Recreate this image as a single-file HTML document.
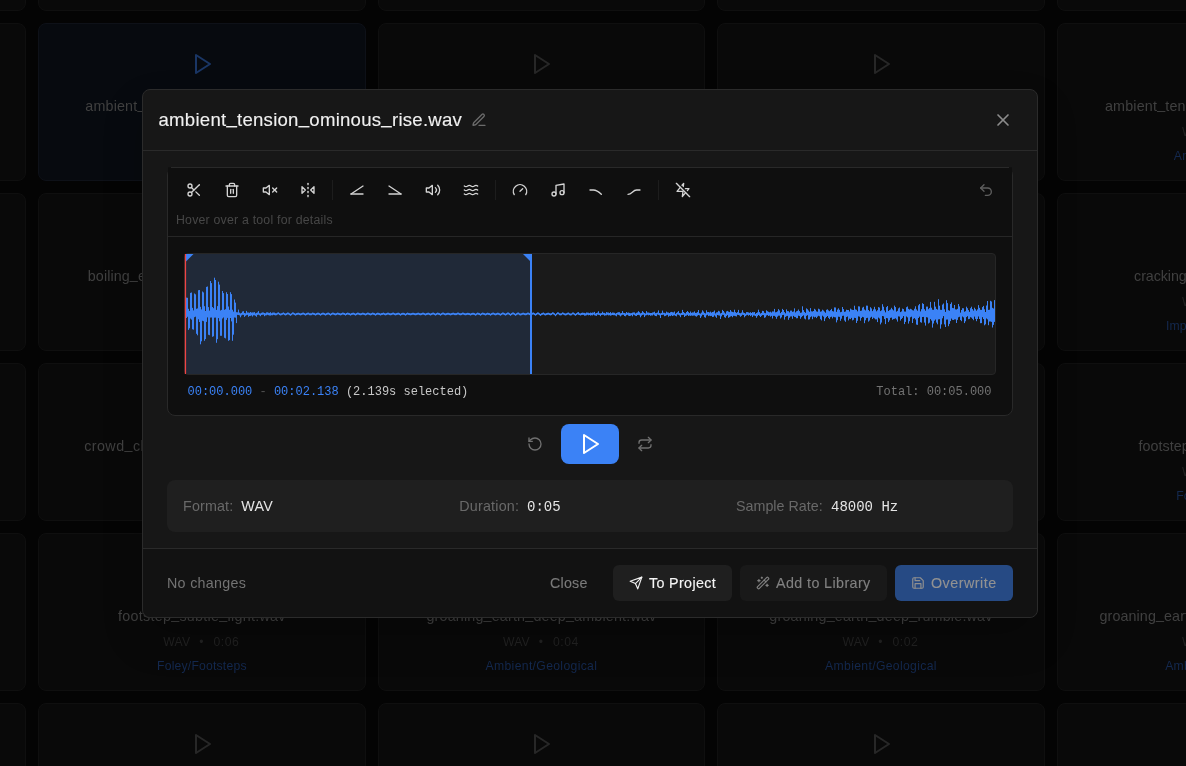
<!DOCTYPE html>
<html><head><meta charset="utf-8"><title>Audio Editor</title><style>
html,body{margin:0;padding:0}
html{width:1186px;height:766px;overflow:hidden;background:#040404}
body{width:1186px;height:766px;overflow:hidden;position:relative;background:#040404;font-family:"Liberation Sans",sans-serif}
#root{position:absolute;left:0;top:0;width:1186px;height:766px;overflow:hidden;will-change:transform}
.ic{position:absolute;display:block;overflow:visible}
.t{position:absolute;white-space:pre}
.u{position:relative;top:-0.145em}
.card{position:absolute;box-sizing:border-box;border:1px solid #0f0f0f;border-radius:8px}
#modal{position:absolute;left:142px;top:89px;width:896px;height:529px;box-sizing:border-box;background:#171717;border:1px solid #2b2b2b;border-radius:8px;box-shadow:0 20px 40px rgba(0,0,0,.2)}
#hdrline{position:absolute;left:143px;top:150px;width:894px;height:1px;background:#2a2a2a}
#ftr{position:absolute;left:143px;top:549px;width:894px;height:68px;background:#121212;border-radius:0 0 8px 8px}
#ftrline{position:absolute;left:143px;top:548px;width:894px;height:1px;background:#2a2a2a}
#panel{position:absolute;left:167px;top:167px;width:846px;height:249px;box-sizing:border-box;background:#0f0f0f;border:1px solid #292929;border-radius:8px}
#toolbar{position:absolute;left:168px;top:167px;width:844px;height:70px;box-sizing:border-box;background:#0f0f0f;border-top:1px solid #292929;border-bottom:1px solid #262626}
.sep{position:absolute;top:180px;width:1px;height:20px;background:#1d1d1d}
#wave{position:absolute;left:184px;top:253px;width:812px;height:122px;box-sizing:border-box;background:#1a1a1a;border:1px solid #262626;border-radius:4px}
#wave>*{position:absolute}
#sel{left:0;top:0;border-radius:3px 0 0 3px;width:347px;height:120px;background:#202938}
#selend{left:345px;top:0;width:2px;height:120px;background:#3b82f6}
#playhead{left:0;top:0;width:1.5px;height:120px;background:#ef4444}
#playbtn{position:absolute;left:561px;top:424px;width:58px;height:40px;border-radius:8px;background:#3b82f6}
#info{position:absolute;left:167px;top:480px;width:846px;height:52px;border-radius:8px;background:#1f1f1f}
.btn{position:absolute;top:565px;height:36px;border-radius:6px}
</style></head>
<body><div id="root">
<div class="card" style="left:-301.45px;top:-147px;width:327.55px;height:158px;background:#090909;border-color:#0f0f0f"></div>
<svg class="ic" style="left:-149.675px;top:-118px" width="24" height="24" viewBox="0 0 24 24" fill="none" stroke="#272727" stroke-width="2" stroke-linecap="round" stroke-linejoin="round"><polygon points="6 3 20 12 6 21 6 3"/></svg>
<div class="card" style="left:-301.45px;top:23px;width:327.55px;height:158px;background:#090909;border-color:#0f0f0f"></div>
<svg class="ic" style="left:-149.675px;top:52px" width="24" height="24" viewBox="0 0 24 24" fill="none" stroke="#272727" stroke-width="2" stroke-linecap="round" stroke-linejoin="round"><polygon points="6 3 20 12 6 21 6 3"/></svg>
<div class="card" style="left:-301.45px;top:193px;width:327.55px;height:158px;background:#090909;border-color:#0f0f0f"></div>
<svg class="ic" style="left:-149.675px;top:222px" width="24" height="24" viewBox="0 0 24 24" fill="none" stroke="#272727" stroke-width="2" stroke-linecap="round" stroke-linejoin="round"><polygon points="6 3 20 12 6 21 6 3"/></svg>
<div class="card" style="left:-301.45px;top:363px;width:327.55px;height:158px;background:#090909;border-color:#0f0f0f"></div>
<svg class="ic" style="left:-149.675px;top:392px" width="24" height="24" viewBox="0 0 24 24" fill="none" stroke="#272727" stroke-width="2" stroke-linecap="round" stroke-linejoin="round"><polygon points="6 3 20 12 6 21 6 3"/></svg>
<div class="card" style="left:-301.45px;top:533px;width:327.55px;height:158px;background:#090909;border-color:#0f0f0f"></div>
<svg class="ic" style="left:-149.675px;top:562px" width="24" height="24" viewBox="0 0 24 24" fill="none" stroke="#272727" stroke-width="2" stroke-linecap="round" stroke-linejoin="round"><polygon points="6 3 20 12 6 21 6 3"/></svg>
<div class="card" style="left:-301.45px;top:703px;width:327.55px;height:158px;background:#090909;border-color:#0f0f0f"></div>
<svg class="ic" style="left:-149.675px;top:732px" width="24" height="24" viewBox="0 0 24 24" fill="none" stroke="#272727" stroke-width="2" stroke-linecap="round" stroke-linejoin="round"><polygon points="6 3 20 12 6 21 6 3"/></svg>
<div class="card" style="left:38.10px;top:-147px;width:327.55px;height:158px;background:#090909;border-color:#0f0f0f"></div>
<svg class="ic" style="left:189.875px;top:-118px" width="24" height="24" viewBox="0 0 24 24" fill="none" stroke="#272727" stroke-width="2" stroke-linecap="round" stroke-linejoin="round"><polygon points="6 3 20 12 6 21 6 3"/></svg>
<div class="card" style="left:38.10px;top:23px;width:327.55px;height:158px;background:#070a0f;border-color:#0e1118"></div>
<svg class="ic" style="left:189.875px;top:52px" width="24" height="24" viewBox="0 0 24 24" fill="none" stroke="#1a3665" stroke-width="2" stroke-linecap="round" stroke-linejoin="round"><polygon points="6 3 20 12 6 21 6 3"/></svg>
<div class="t" style="left:-98.125px;width:600px;text-align:center;top:98.90px;font:14.3px/14.3px 'Liberation Sans',sans-serif;letter-spacing:0.183px;color:#404040;">ambient<span class="u">_</span>tension<span class="u">_</span>ominous<span class="u">_</span>rise.wav</div>
<div class="t" style="left:-123.125px;width:600px;text-align:center;top:126.17px;font:12.2px/12.2px 'Liberation Sans',sans-serif;letter-spacing:0.2px;color:#222222;">WAV</div>
<div class="t" style="left:-98.625px;width:600px;text-align:center;top:126.34px;font:12px/12px 'Liberation Sans',sans-serif;color:#222222;">•</div>
<div class="t" style="left:-73.625px;width:600px;text-align:center;top:126.17px;font:12.2px/12.2px 'Liberation Sans',sans-serif;letter-spacing:0.5px;color:#222222;">0:05</div>
<div class="t" style="left:-98.125px;width:600px;text-align:center;top:150.17px;font:12.2px/12.2px 'Liberation Sans',sans-serif;letter-spacing:0.129px;color:#14294f;">Ambient/Tension</div>
<div class="card" style="left:38.10px;top:193px;width:327.55px;height:158px;background:#090909;border-color:#0f0f0f"></div>
<svg class="ic" style="left:189.875px;top:222px" width="24" height="24" viewBox="0 0 24 24" fill="none" stroke="#272727" stroke-width="2" stroke-linecap="round" stroke-linejoin="round"><polygon points="6 3 20 12 6 21 6 3"/></svg>
<div class="t" style="left:-98.125px;width:600px;text-align:center;top:268.90px;font:14.3px/14.3px 'Liberation Sans',sans-serif;letter-spacing:0.101px;color:#404040;">boiling<span class="u">_</span>earth<span class="u">_</span>magma<span class="u">_</span>bubbles.wav</div>
<div class="t" style="left:-123.125px;width:600px;text-align:center;top:296.17px;font:12.2px/12.2px 'Liberation Sans',sans-serif;letter-spacing:0.2px;color:#222222;">WAV</div>
<div class="t" style="left:-98.625px;width:600px;text-align:center;top:296.34px;font:12px/12px 'Liberation Sans',sans-serif;color:#222222;">•</div>
<div class="t" style="left:-73.625px;width:600px;text-align:center;top:296.17px;font:12.2px/12.2px 'Liberation Sans',sans-serif;letter-spacing:0.5px;color:#222222;">0:07</div>
<div class="t" style="left:-98.125px;width:600px;text-align:center;top:320.17px;font:12.2px/12.2px 'Liberation Sans',sans-serif;letter-spacing:0.336px;color:#14294f;">Ambient/Geological</div>
<div class="card" style="left:38.10px;top:363px;width:327.55px;height:158px;background:#090909;border-color:#0f0f0f"></div>
<svg class="ic" style="left:189.875px;top:392px" width="24" height="24" viewBox="0 0 24 24" fill="none" stroke="#272727" stroke-width="2" stroke-linecap="round" stroke-linejoin="round"><polygon points="6 3 20 12 6 21 6 3"/></svg>
<div class="t" style="left:-98.125px;width:600px;text-align:center;top:438.90px;font:14.3px/14.3px 'Liberation Sans',sans-serif;letter-spacing:0.453px;color:#404040;">crowd<span class="u">_</span>chatter<span class="u">_</span>market<span class="u">_</span>distant.wav</div>
<div class="t" style="left:-123.125px;width:600px;text-align:center;top:466.17px;font:12.2px/12.2px 'Liberation Sans',sans-serif;letter-spacing:0.2px;color:#222222;">WAV</div>
<div class="t" style="left:-98.625px;width:600px;text-align:center;top:466.34px;font:12px/12px 'Liberation Sans',sans-serif;color:#222222;">•</div>
<div class="t" style="left:-73.625px;width:600px;text-align:center;top:466.17px;font:12.2px/12.2px 'Liberation Sans',sans-serif;letter-spacing:0.5px;color:#222222;">0:09</div>
<div class="t" style="left:-98.125px;width:600px;text-align:center;top:490.17px;font:12.2px/12.2px 'Liberation Sans',sans-serif;letter-spacing:0.133px;color:#14294f;">Ambient/Crowd</div>
<div class="card" style="left:38.10px;top:533px;width:327.55px;height:158px;background:#090909;border-color:#0f0f0f"></div>
<svg class="ic" style="left:189.875px;top:562px" width="24" height="24" viewBox="0 0 24 24" fill="none" stroke="#272727" stroke-width="2" stroke-linecap="round" stroke-linejoin="round"><polygon points="6 3 20 12 6 21 6 3"/></svg>
<div class="t" style="left:-98.125px;width:600px;text-align:center;top:608.90px;font:14.3px/14.3px 'Liberation Sans',sans-serif;letter-spacing:0.284px;color:#404040;">footstep<span class="u">_</span>subtle<span class="u">_</span>light.wav</div>
<div class="t" style="left:-123.125px;width:600px;text-align:center;top:636.17px;font:12.2px/12.2px 'Liberation Sans',sans-serif;letter-spacing:0.2px;color:#222222;">WAV</div>
<div class="t" style="left:-98.625px;width:600px;text-align:center;top:636.34px;font:12px/12px 'Liberation Sans',sans-serif;color:#222222;">•</div>
<div class="t" style="left:-73.625px;width:600px;text-align:center;top:636.17px;font:12.2px/12.2px 'Liberation Sans',sans-serif;letter-spacing:0.5px;color:#222222;">0:06</div>
<div class="t" style="left:-98.125px;width:600px;text-align:center;top:660.17px;font:12.2px/12.2px 'Liberation Sans',sans-serif;letter-spacing:0.193px;color:#14294f;">Foley/Footsteps</div>
<div class="card" style="left:38.10px;top:703px;width:327.55px;height:158px;background:#090909;border-color:#0f0f0f"></div>
<svg class="ic" style="left:189.875px;top:732px" width="24" height="24" viewBox="0 0 24 24" fill="none" stroke="#272727" stroke-width="2" stroke-linecap="round" stroke-linejoin="round"><polygon points="6 3 20 12 6 21 6 3"/></svg>
<div class="card" style="left:377.65px;top:-147px;width:327.55px;height:158px;background:#090909;border-color:#0f0f0f"></div>
<svg class="ic" style="left:529.425px;top:-118px" width="24" height="24" viewBox="0 0 24 24" fill="none" stroke="#272727" stroke-width="2" stroke-linecap="round" stroke-linejoin="round"><polygon points="6 3 20 12 6 21 6 3"/></svg>
<div class="card" style="left:377.65px;top:23px;width:327.55px;height:158px;background:#090909;border-color:#0f0f0f"></div>
<svg class="ic" style="left:529.425px;top:52px" width="24" height="24" viewBox="0 0 24 24" fill="none" stroke="#272727" stroke-width="2" stroke-linecap="round" stroke-linejoin="round"><polygon points="6 3 20 12 6 21 6 3"/></svg>
<div class="card" style="left:377.65px;top:193px;width:327.55px;height:158px;background:#090909;border-color:#0f0f0f"></div>
<svg class="ic" style="left:529.425px;top:222px" width="24" height="24" viewBox="0 0 24 24" fill="none" stroke="#272727" stroke-width="2" stroke-linecap="round" stroke-linejoin="round"><polygon points="6 3 20 12 6 21 6 3"/></svg>
<div class="card" style="left:377.65px;top:363px;width:327.55px;height:158px;background:#090909;border-color:#0f0f0f"></div>
<svg class="ic" style="left:529.425px;top:392px" width="24" height="24" viewBox="0 0 24 24" fill="none" stroke="#272727" stroke-width="2" stroke-linecap="round" stroke-linejoin="round"><polygon points="6 3 20 12 6 21 6 3"/></svg>
<div class="card" style="left:377.65px;top:533px;width:327.55px;height:158px;background:#090909;border-color:#0f0f0f"></div>
<svg class="ic" style="left:529.425px;top:562px" width="24" height="24" viewBox="0 0 24 24" fill="none" stroke="#272727" stroke-width="2" stroke-linecap="round" stroke-linejoin="round"><polygon points="6 3 20 12 6 21 6 3"/></svg>
<div class="t" style="left:241.425px;width:600px;text-align:center;top:608.90px;font:14.3px/14.3px 'Liberation Sans',sans-serif;letter-spacing:0.187px;color:#404040;">groaning<span class="u">_</span>earth<span class="u">_</span>deep<span class="u">_</span>ambient.wav</div>
<div class="t" style="left:216.425px;width:600px;text-align:center;top:636.17px;font:12.2px/12.2px 'Liberation Sans',sans-serif;letter-spacing:0.2px;color:#222222;">WAV</div>
<div class="t" style="left:240.925px;width:600px;text-align:center;top:636.34px;font:12px/12px 'Liberation Sans',sans-serif;color:#222222;">•</div>
<div class="t" style="left:265.925px;width:600px;text-align:center;top:636.17px;font:12.2px/12.2px 'Liberation Sans',sans-serif;letter-spacing:0.5px;color:#222222;">0:04</div>
<div class="t" style="left:241.425px;width:600px;text-align:center;top:660.17px;font:12.2px/12.2px 'Liberation Sans',sans-serif;letter-spacing:0.336px;color:#14294f;">Ambient/Geological</div>
<div class="card" style="left:377.65px;top:703px;width:327.55px;height:158px;background:#090909;border-color:#0f0f0f"></div>
<svg class="ic" style="left:529.425px;top:732px" width="24" height="24" viewBox="0 0 24 24" fill="none" stroke="#272727" stroke-width="2" stroke-linecap="round" stroke-linejoin="round"><polygon points="6 3 20 12 6 21 6 3"/></svg>
<div class="card" style="left:717.20px;top:-147px;width:327.55px;height:158px;background:#090909;border-color:#0f0f0f"></div>
<svg class="ic" style="left:868.975px;top:-118px" width="24" height="24" viewBox="0 0 24 24" fill="none" stroke="#272727" stroke-width="2" stroke-linecap="round" stroke-linejoin="round"><polygon points="6 3 20 12 6 21 6 3"/></svg>
<div class="card" style="left:717.20px;top:23px;width:327.55px;height:158px;background:#090909;border-color:#0f0f0f"></div>
<svg class="ic" style="left:868.975px;top:52px" width="24" height="24" viewBox="0 0 24 24" fill="none" stroke="#272727" stroke-width="2" stroke-linecap="round" stroke-linejoin="round"><polygon points="6 3 20 12 6 21 6 3"/></svg>
<div class="card" style="left:717.20px;top:193px;width:327.55px;height:158px;background:#090909;border-color:#0f0f0f"></div>
<svg class="ic" style="left:868.975px;top:222px" width="24" height="24" viewBox="0 0 24 24" fill="none" stroke="#272727" stroke-width="2" stroke-linecap="round" stroke-linejoin="round"><polygon points="6 3 20 12 6 21 6 3"/></svg>
<div class="card" style="left:717.20px;top:363px;width:327.55px;height:158px;background:#090909;border-color:#0f0f0f"></div>
<svg class="ic" style="left:868.975px;top:392px" width="24" height="24" viewBox="0 0 24 24" fill="none" stroke="#272727" stroke-width="2" stroke-linecap="round" stroke-linejoin="round"><polygon points="6 3 20 12 6 21 6 3"/></svg>
<div class="card" style="left:717.20px;top:533px;width:327.55px;height:158px;background:#090909;border-color:#0f0f0f"></div>
<svg class="ic" style="left:868.975px;top:562px" width="24" height="24" viewBox="0 0 24 24" fill="none" stroke="#272727" stroke-width="2" stroke-linecap="round" stroke-linejoin="round"><polygon points="6 3 20 12 6 21 6 3"/></svg>
<div class="t" style="left:580.975px;width:600px;text-align:center;top:608.90px;font:14.3px/14.3px 'Liberation Sans',sans-serif;letter-spacing:0.209px;color:#404040;">groaning<span class="u">_</span>earth<span class="u">_</span>deep<span class="u">_</span>rumble.wav</div>
<div class="t" style="left:555.975px;width:600px;text-align:center;top:636.17px;font:12.2px/12.2px 'Liberation Sans',sans-serif;letter-spacing:0.2px;color:#222222;">WAV</div>
<div class="t" style="left:580.475px;width:600px;text-align:center;top:636.34px;font:12px/12px 'Liberation Sans',sans-serif;color:#222222;">•</div>
<div class="t" style="left:605.475px;width:600px;text-align:center;top:636.17px;font:12.2px/12.2px 'Liberation Sans',sans-serif;letter-spacing:0.5px;color:#222222;">0:02</div>
<div class="t" style="left:580.975px;width:600px;text-align:center;top:660.17px;font:12.2px/12.2px 'Liberation Sans',sans-serif;letter-spacing:0.336px;color:#14294f;">Ambient/Geological</div>
<div class="card" style="left:717.20px;top:703px;width:327.55px;height:158px;background:#090909;border-color:#0f0f0f"></div>
<svg class="ic" style="left:868.975px;top:732px" width="24" height="24" viewBox="0 0 24 24" fill="none" stroke="#272727" stroke-width="2" stroke-linecap="round" stroke-linejoin="round"><polygon points="6 3 20 12 6 21 6 3"/></svg>
<div class="card" style="left:1056.75px;top:-147px;width:327.55px;height:158px;background:#090909;border-color:#0f0f0f"></div>
<svg class="ic" style="left:1208.53px;top:-118px" width="24" height="24" viewBox="0 0 24 24" fill="none" stroke="#272727" stroke-width="2" stroke-linecap="round" stroke-linejoin="round"><polygon points="6 3 20 12 6 21 6 3"/></svg>
<div class="card" style="left:1056.75px;top:23px;width:327.55px;height:158px;background:#090909;border-color:#0f0f0f"></div>
<svg class="ic" style="left:1208.53px;top:52px" width="24" height="24" viewBox="0 0 24 24" fill="none" stroke="#272727" stroke-width="2" stroke-linecap="round" stroke-linejoin="round"><polygon points="6 3 20 12 6 21 6 3"/></svg>
<div class="t" style="left:920.525px;width:600px;text-align:center;top:98.90px;font:14.3px/14.3px 'Liberation Sans',sans-serif;letter-spacing:0.194px;color:#404040;">ambient<span class="u">_</span>tension<span class="u">_</span>subtle<span class="u">_</span>drone.wav</div>
<div class="t" style="left:895.525px;width:600px;text-align:center;top:126.17px;font:12.2px/12.2px 'Liberation Sans',sans-serif;letter-spacing:0.2px;color:#222222;">WAV</div>
<div class="t" style="left:920.025px;width:600px;text-align:center;top:126.34px;font:12px/12px 'Liberation Sans',sans-serif;color:#222222;">•</div>
<div class="t" style="left:945.025px;width:600px;text-align:center;top:126.17px;font:12.2px/12.2px 'Liberation Sans',sans-serif;letter-spacing:0.5px;color:#222222;">0:08</div>
<div class="t" style="left:920.525px;width:600px;text-align:center;top:150.17px;font:12.2px/12.2px 'Liberation Sans',sans-serif;letter-spacing:0.215px;color:#14294f;">Ambient/Tension</div>
<div class="card" style="left:1056.75px;top:193px;width:327.55px;height:158px;background:#090909;border-color:#0f0f0f"></div>
<svg class="ic" style="left:1208.53px;top:222px" width="24" height="24" viewBox="0 0 24 24" fill="none" stroke="#272727" stroke-width="2" stroke-linecap="round" stroke-linejoin="round"><polygon points="6 3 20 12 6 21 6 3"/></svg>
<div class="t" style="left:920.525px;width:600px;text-align:center;top:268.90px;font:14.3px/14.3px 'Liberation Sans',sans-serif;letter-spacing:-0.081px;color:#404040;">cracking<span class="u">_</span>wood<span class="u">_</span>impact.wav</div>
<div class="t" style="left:895.525px;width:600px;text-align:center;top:296.17px;font:12.2px/12.2px 'Liberation Sans',sans-serif;letter-spacing:0.2px;color:#222222;">WAV</div>
<div class="t" style="left:920.025px;width:600px;text-align:center;top:296.34px;font:12px/12px 'Liberation Sans',sans-serif;color:#222222;">•</div>
<div class="t" style="left:945.025px;width:600px;text-align:center;top:296.17px;font:12.2px/12.2px 'Liberation Sans',sans-serif;letter-spacing:0.5px;color:#222222;">0:03</div>
<div class="t" style="left:920.525px;width:600px;text-align:center;top:320.17px;font:12.2px/12.2px 'Liberation Sans',sans-serif;letter-spacing:0.066px;color:#14294f;">Impacts/Destruction</div>
<div class="card" style="left:1056.75px;top:363px;width:327.55px;height:158px;background:#090909;border-color:#0f0f0f"></div>
<svg class="ic" style="left:1208.53px;top:392px" width="24" height="24" viewBox="0 0 24 24" fill="none" stroke="#272727" stroke-width="2" stroke-linecap="round" stroke-linejoin="round"><polygon points="6 3 20 12 6 21 6 3"/></svg>
<div class="t" style="left:920.525px;width:600px;text-align:center;top:438.90px;font:14.3px/14.3px 'Liberation Sans',sans-serif;letter-spacing:0.036px;color:#404040;">footstep<span class="u">_</span>subtle<span class="u">_</span>hard.wav</div>
<div class="t" style="left:895.525px;width:600px;text-align:center;top:466.17px;font:12.2px/12.2px 'Liberation Sans',sans-serif;letter-spacing:0.2px;color:#222222;">WAV</div>
<div class="t" style="left:920.025px;width:600px;text-align:center;top:466.34px;font:12px/12px 'Liberation Sans',sans-serif;color:#222222;">•</div>
<div class="t" style="left:945.025px;width:600px;text-align:center;top:466.17px;font:12.2px/12.2px 'Liberation Sans',sans-serif;letter-spacing:0.5px;color:#222222;">0:04</div>
<div class="t" style="left:920.525px;width:600px;text-align:center;top:490.17px;font:12.2px/12.2px 'Liberation Sans',sans-serif;letter-spacing:0.129px;color:#14294f;">Foley/Footsteps</div>
<div class="card" style="left:1056.75px;top:533px;width:327.55px;height:158px;background:#090909;border-color:#0f0f0f"></div>
<svg class="ic" style="left:1208.53px;top:562px" width="24" height="24" viewBox="0 0 24 24" fill="none" stroke="#272727" stroke-width="2" stroke-linecap="round" stroke-linejoin="round"><polygon points="6 3 20 12 6 21 6 3"/></svg>
<div class="t" style="left:920.525px;width:600px;text-align:center;top:608.90px;font:14.3px/14.3px 'Liberation Sans',sans-serif;letter-spacing:0.106px;color:#404040;">groaning<span class="u">_</span>earth<span class="u">_</span>rumble<span class="u">_</span>distance.wav</div>
<div class="t" style="left:895.525px;width:600px;text-align:center;top:636.17px;font:12.2px/12.2px 'Liberation Sans',sans-serif;letter-spacing:0.2px;color:#222222;">WAV</div>
<div class="t" style="left:920.025px;width:600px;text-align:center;top:636.34px;font:12px/12px 'Liberation Sans',sans-serif;color:#222222;">•</div>
<div class="t" style="left:945.025px;width:600px;text-align:center;top:636.17px;font:12.2px/12.2px 'Liberation Sans',sans-serif;letter-spacing:0.5px;color:#222222;">0:05</div>
<div class="t" style="left:920.525px;width:600px;text-align:center;top:660.17px;font:12.2px/12.2px 'Liberation Sans',sans-serif;letter-spacing:0.283px;color:#14294f;">Ambient/Geological</div>
<div class="card" style="left:1056.75px;top:703px;width:327.55px;height:158px;background:#090909;border-color:#0f0f0f"></div>
<svg class="ic" style="left:1208.53px;top:732px" width="24" height="24" viewBox="0 0 24 24" fill="none" stroke="#272727" stroke-width="2" stroke-linecap="round" stroke-linejoin="round"><polygon points="6 3 20 12 6 21 6 3"/></svg>
<div id="modal"></div>
<div id="ftr"></div><div id="hdrline"></div><div id="ftrline"></div>
<div class="t" style="left:158.5px;top:110.76px;font:18.6px/18.6px 'Liberation Sans',sans-serif;letter-spacing:0.25px;color:#f0f0f0;-webkit-text-stroke:0.12px currentColor">ambient<span class="u">_</span>tension<span class="u">_</span>ominous<span class="u">_</span>rise.wav</div>
<svg class="ic" style="left:471px;top:112px" width="16" height="16" viewBox="0 0 24 24" fill="none" stroke="#6b6b6b" stroke-width="2" stroke-linecap="round" stroke-linejoin="round"><path d="M12 20h9"/><path d="M16.376 3.622a1 1 0 0 1 3.002 3.002L7.368 18.635a2 2 0 0 1-.855.506l-2.872.838a.5.5 0 0 1-.62-.62l.838-2.872a2 2 0 0 1 .506-.854z"/></svg>
<svg class="ic" style="left:993px;top:110px" width="20" height="20" viewBox="0 0 24 24" fill="none" stroke="#8c8c8c" stroke-width="2" stroke-linecap="round" stroke-linejoin="round"><path d="M18 6 6 18"/><path d="m6 6 12 12"/></svg>
<div id="panel"></div><div id="toolbar"></div><div style="position:absolute;left:168px;top:167px;width:3px;height:1px;background:#111"></div><div style="position:absolute;left:1009px;top:167px;width:3px;height:1px;background:#111"></div>
<svg class="ic" style="left:186px;top:182px" width="16" height="16" viewBox="0 0 24 24" fill="none" stroke="#d4d4d4" stroke-width="2" stroke-linecap="round" stroke-linejoin="round"><circle cx="6" cy="6" r="3"/><path d="M8.12 8.12 12 12"/><path d="M20 4 8.12 15.88"/><circle cx="6" cy="18" r="3"/><path d="M14.8 14.8 20 20"/></svg>
<svg class="ic" style="left:224px;top:182px" width="16" height="16" viewBox="0 0 24 24" fill="none" stroke="#d4d4d4" stroke-width="2" stroke-linecap="round" stroke-linejoin="round"><path d="M3 6h18"/><path d="M19 6v14c0 1-1 2-2 2H7c-1 0-2-1-2-2V6"/><path d="M8 6V4c0-1 1-2 2-2h4c1 0 2 1 2 2v2"/><path d="M10 11v6"/><path d="M14 11v6"/></svg>
<svg class="ic" style="left:262px;top:182px" width="16" height="16" viewBox="0 0 24 24" fill="none" stroke="#d4d4d4" stroke-width="2" stroke-linecap="round" stroke-linejoin="round"><polygon points="11 5 6 9 2 9 2 15 6 15 11 19 11 5"/><path d="M22 9l-6 6"/><path d="M16 9l6 6"/></svg>
<svg class="ic" style="left:300px;top:182px" width="16" height="16" viewBox="0 0 24 24" fill="none" stroke="#d4d4d4" stroke-width="2" stroke-linecap="round" stroke-linejoin="round"><path d="m3 7 5 5-5 5V7"/><path d="m21 7-5 5 5 5V7"/><path d="M12 20v2"/><path d="M12 14v2"/><path d="M12 8v2"/><path d="M12 2v2"/></svg>
<svg class="ic" style="left:349px;top:182px" width="16" height="16" viewBox="0 0 24 24" fill="none" stroke="#d4d4d4" stroke-width="2" stroke-linecap="round" stroke-linejoin="round"><path d="M3 18h18"/><path d="M3 18 21 6"/></svg>
<svg class="ic" style="left:387px;top:182px" width="16" height="16" viewBox="0 0 24 24" fill="none" stroke="#d4d4d4" stroke-width="2" stroke-linecap="round" stroke-linejoin="round"><path d="M3 18h18"/><path d="M3 6 21 18"/></svg>
<svg class="ic" style="left:425px;top:182px" width="16" height="16" viewBox="0 0 24 24" fill="none" stroke="#d4d4d4" stroke-width="2" stroke-linecap="round" stroke-linejoin="round"><polygon points="11 5 6 9 2 9 2 15 6 15 11 19 11 5"/><path d="M15.540 8.460a5 5 0 0 1 0 7.070"/><path d="M19.070 4.930a10 10 0 0 1 0 14.140"/></svg>
<svg class="ic" style="left:463px;top:182px" width="16" height="16" viewBox="0 0 24 24" fill="none" stroke="#d4d4d4" stroke-width="2" stroke-linecap="round" stroke-linejoin="round"><path d="M2 6c.6.5 1.2 1 2.500 1C7 7 7 5 9.500 5c2.600 0 2.400 2 5 2 2.500 0 2.500-2 5-2 1.300 0 1.900.5 2.500 1"/><path d="M2 12c.6.5 1.200 1 2.500 1 2.500 0 2.500-2 5-2 2.600 0 2.400 2 5 2 2.500 0 2.500-2 5-2 1.300 0 1.900.5 2.500 1"/><path d="M2 18c.6.5 1.200 1 2.500 1 2.500 0 2.500-2 5-2 2.600 0 2.400 2 5 2 2.500 0 2.500-2 5-2 1.300 0 1.900.5 2.500 1"/></svg>
<svg class="ic" style="left:512px;top:182px" width="16" height="16" viewBox="0 0 24 24" fill="none" stroke="#d4d4d4" stroke-width="2" stroke-linecap="round" stroke-linejoin="round"><path d="m12 14 4-4"/><path d="M3.340 19a10 10 0 1 1 17.320 0"/></svg>
<svg class="ic" style="left:550px;top:182px" width="16" height="16" viewBox="0 0 24 24" fill="none" stroke="#d4d4d4" stroke-width="2" stroke-linecap="round" stroke-linejoin="round"><path d="M9 18V5l12-2v13"/><circle cx="6" cy="18" r="3"/><circle cx="18" cy="16" r="3"/></svg>
<svg class="ic" style="left:588px;top:182px" width="16" height="16" viewBox="0 0 24 24" fill="none" stroke="#d4d4d4" stroke-width="2" stroke-linecap="round" stroke-linejoin="round"><path d="M3 12h5c5 0 8 2.500 12 6.500"/></svg>
<svg class="ic" style="left:626px;top:182px" width="16" height="16" viewBox="0 0 24 24" fill="none" stroke="#d4d4d4" stroke-width="2" stroke-linecap="round" stroke-linejoin="round"><path d="M3 18.500c6 0 7-6.500 13-6.500h5"/></svg>
<svg class="ic" style="left:675px;top:182px" width="16" height="16" viewBox="0 0 24 24" fill="none" stroke="#d4d4d4" stroke-width="2" stroke-linecap="round" stroke-linejoin="round"><polyline points="12.41 6.75 13 2 10.57 4.92"/><polyline points="18.57 12.91 21 10 15.66 10"/><polyline points="8 8 3 14 12 14 11 22 16 16"/><path d="M2 2l20 20"/></svg>
<div class="sep" style="left:332px"></div>
<div class="sep" style="left:495px"></div>
<div class="sep" style="left:658px"></div>
<svg class="ic" style="left:978px;top:182px" width="16" height="16" viewBox="0 0 24 24" fill="none" stroke="#5e5e5e" stroke-width="2" stroke-linecap="round" stroke-linejoin="round"><path d="M9 14 4 9l5-5"/><path d="M4 9h10.500a5.500 5.500 0 0 1 5.500 5.500a5.500 5.500 0 0 1-5.500 5.500H11"/></svg>
<div class="t" style="left:176px;top:213.59px;font:12.3px/12.3px 'Liberation Sans',sans-serif;letter-spacing:0.22px;color:#474747;">Hover over a tool for details</div>
<div id="wave"><div id="sel"></div><svg class="ic" style="left:0;top:0" width="810" height="120" viewBox="0 0 810 120"><path d="M0.5 56.1V75.8M1.5 43.6V64.0M2.5 43.8V62.8M3.5 54.8V75.9M4.5 56.9V74.3M5.5 38.9V64.6M6.5 38.5V65.6M7.5 53.9V75.3M8.5 56.4V75.7M9.5 39.5V63.2M10.5 40.3V62.7M11.5 54.8V79.8M12.5 54.4V81.3M13.5 36.2V65.3M14.5 36.0V68.0M15.5 52.8V90.3M16.5 55.4V87.3M17.5 37.5V66.8M18.5 38.4V67.2M19.5 52.2V86.8M20.5 57.0V85.1M21.5 32.9V67.9M22.5 32.5V63.4M23.5 53.1V80.8M24.5 56.6V81.2M25.5 27.0V63.6M26.5 29.1V63.5M27.5 53.0V82.8M28.5 54.2V82.3M29.5 23.7V63.7M30.5 26.0V63.6M31.5 55.9V88.8M32.5 52.1V85.2M33.5 27.7V64.1M34.5 30.6V67.3M35.5 56.5V81.8M36.5 55.9V81.8M37.5 37.0V64.5M38.5 39.1V63.5M39.5 55.8V83.8M40.5 55.2V84.4M41.5 38.2V65.9M42.5 40.0V63.9M43.5 52.5V86.8M44.5 55.8V86.1M45.5 38.2V64.0M46.5 40.1V67.4M47.5 55.7V86.8M48.5 57.6V80.7M49.5 45.5V63.5M50.5 48.6V63.7M51.5 58.2V69.1M52.5 58.3V60.9M53.5 55.6V61.0M54.5 58.6V61.4M55.5 59.4V63.3M56.5 58.9V61.5M57.5 57.5V60.8M58.5 57.2V60.9M59.5 59.0V62.9M60.5 59.3V61.8M61.5 56.9V61.2M62.5 58.5V60.9M63.5 58.5V62.8M64.5 58.8V62.0M65.5 58.0V61.9M66.5 58.6V61.4M67.5 58.4V62.5M68.5 58.4V61.3M69.5 58.1V61.3M70.5 59.4V61.8M71.5 58.9V62.8M72.5 58.4V60.9M73.5 57.1V60.7M74.5 59.2V61.3M75.5 59.4V62.2M76.5 58.8V61.0M77.5 58.4V60.8M78.5 58.5V60.7M79.5 59.0V62.2M80.5 59.3V61.4M81.5 58.4V61.3M82.5 58.3V60.8M83.5 58.7V61.2M84.5 58.9V61.5M85.5 58.2V61.6M86.5 59.2V61.2M87.5 58.6V61.3M88.5 58.5V60.8M89.5 58.6V61.1M90.5 59.2V61.4M91.5 59.2V61.2M92.5 58.6V60.6M93.5 58.3V60.3M94.5 59.1V61.1M95.5 59.5V61.5M96.5 59.2V61.2M97.5 58.8V60.8M98.5 58.4V60.4M99.5 59.1V61.1M100.5 59.5V61.5M101.5 59.1V61.1M102.5 58.5V60.5M103.5 58.6V60.6M104.5 59.2V61.2M105.5 59.8V61.8M106.5 59.2V61.2M107.5 58.4V60.4M108.5 58.5V60.5M109.5 59.1V61.1M110.5 59.6V61.6M111.5 59.1V61.1M112.5 58.8V60.8M113.5 58.7V60.7M114.5 59.1V61.1M115.5 59.4V61.4M116.5 59.1V61.1M117.5 58.7V60.7M118.5 58.6V60.6M119.5 59.1V61.1M120.5 59.6V61.6M121.5 59.1V61.1M122.5 58.7V60.7M123.5 58.6V60.6M124.5 59.2V61.2M125.5 59.3V61.3M126.5 59.2V61.2M127.5 58.6V60.6M128.5 58.8V60.8M129.5 59.1V61.1M130.5 59.6V61.6M131.5 59.1V61.1M132.5 58.7V60.7M133.5 58.7V60.7M134.5 59.1V61.1M135.5 59.7V61.7M136.5 59.1V61.1M137.5 58.7V60.7M138.5 58.7V60.7M139.5 59.1V61.1M140.5 59.6V61.6M141.5 59.1V61.1M142.5 58.7V60.7M143.5 58.6V60.6M144.5 59.1V61.1M145.5 59.7V61.7M146.5 59.1V61.1M147.5 58.6V60.6M148.5 58.7V60.7M149.5 59.1V61.1M150.5 59.4V61.4M151.5 59.1V61.1M152.5 58.6V60.6M153.5 58.8V60.8M154.5 59.1V61.1M155.5 59.4V61.4M156.5 59.1V61.1M157.5 58.6V60.6M158.5 58.7V60.7M159.5 59.0V61.0M160.5 59.6V61.6M161.5 59.0V61.0M162.5 58.6V60.6M163.5 58.8V60.8M164.5 59.1V61.1M165.5 59.6V61.6M166.5 59.1V61.1M167.5 58.8V60.8M168.5 58.7V60.7M169.5 59.1V61.1M170.5 59.6V61.6M171.5 59.1V61.1M172.5 58.6V60.6M173.5 58.7V60.7M174.5 59.1V61.1M175.5 59.3V61.3M176.5 59.1V61.1M177.5 58.7V60.7M178.5 58.8V60.8M179.5 59.1V61.1M180.5 59.5V61.5M181.5 59.1V61.1M182.5 58.6V60.6M183.5 58.7V60.7M184.5 59.1V61.1M185.5 59.4V61.4M186.5 59.1V61.1M187.5 58.6V60.6M188.5 58.8V60.8M189.5 59.1V61.1M190.5 59.7V61.7M191.5 59.1V61.1M192.5 58.7V60.7M193.5 58.8V60.8M194.5 59.1V61.1M195.5 59.5V61.5M196.5 59.1V61.1M197.5 58.9V60.9M198.5 58.6V60.6M199.5 59.1V61.1M200.5 59.4V61.4M201.5 59.1V61.1M202.5 58.7V60.7M203.5 58.7V60.7M204.5 59.1V61.1M205.5 59.3V61.3M206.5 59.1V61.1M207.5 58.7V60.7M208.5 58.6V60.6M209.5 59.1V61.1M210.5 59.4V61.4M211.5 59.1V61.1M212.5 58.8V60.8M213.5 58.7V60.7M214.5 59.1V61.1M215.5 59.7V61.7M216.5 59.1V61.1M217.5 58.8V60.8M218.5 58.8V60.8M219.5 59.1V61.1M220.5 59.7V61.7M221.5 59.1V61.1M222.5 58.6V60.6M223.5 58.9V60.9M224.5 59.1V61.1M225.5 59.3V61.3M226.5 59.1V61.1M227.5 58.8V60.8M228.5 58.8V60.8M229.5 59.1V61.1M230.5 59.3V61.3M231.5 59.1V61.1M232.5 58.8V60.8M233.5 58.7V60.7M234.5 59.1V61.1M235.5 59.3V61.3M236.5 59.1V61.1M237.5 58.7V60.7M238.5 58.7V60.7M239.5 59.1V61.1M240.5 59.5V61.5M241.5 59.1V61.1M242.5 58.8V60.8M243.5 58.7V60.7M244.5 59.1V61.1M245.5 59.5V61.5M246.5 59.1V61.1M247.5 58.7V60.7M248.5 58.6V60.6M249.5 59.1V61.1M250.5 59.6V61.6M251.5 59.1V61.1M252.5 58.6V60.6M253.5 58.8V60.8M254.5 59.1V61.1M255.5 59.7V61.7M256.5 59.1V61.1M257.5 58.6V60.6M258.5 58.6V60.6M259.5 59.1V61.1M260.5 59.4V61.4M261.5 59.1V61.1M262.5 58.8V60.8M263.5 58.8V60.8M264.5 59.1V61.1M265.5 59.4V61.4M266.5 59.1V61.1M267.5 58.8V60.8M268.5 58.7V60.7M269.5 59.1V61.1M270.5 59.2V61.2M271.5 59.1V61.1M272.5 58.6V60.6M273.5 58.6V60.6M274.5 59.1V61.1M275.5 59.3V61.3M276.5 59.1V61.1M277.5 58.6V60.6M278.5 58.7V60.7M279.5 59.1V61.1M280.5 59.3V61.3M281.5 59.1V61.1M282.5 58.8V60.8M283.5 58.9V60.9M284.5 59.1V61.1M285.5 59.5V61.5M286.5 59.1V61.1M287.5 58.8V60.8M288.5 58.8V60.8M289.5 59.1V61.1M290.5 59.7V61.7M291.5 59.2V61.2M292.5 58.6V60.6M293.5 58.8V60.8M294.5 59.1V61.1M295.5 59.7V61.7M296.5 59.1V61.1M297.5 58.6V60.6M298.5 58.8V60.8M299.5 59.1V61.1M300.5 59.5V61.5M301.5 59.1V61.1M302.5 58.7V60.7M303.5 58.9V60.9M304.5 59.1V61.1M305.5 59.7V61.7M306.5 59.1V61.1M307.5 58.7V60.7M308.5 58.6V60.6M309.5 59.1V61.1M310.5 59.4V61.4M311.5 59.1V61.1M312.5 58.7V60.7M313.5 58.8V60.8M314.5 59.2V61.2M315.5 59.7V61.7M316.5 59.1V61.1M317.5 58.5V60.5M318.5 58.6V60.6M319.5 59.1V61.1M320.5 59.6V61.6M321.5 59.1V61.1M322.5 58.5V60.5M323.5 58.5V60.5M324.5 59.1V61.1M325.5 59.8V61.8M326.5 59.1V61.1M327.5 58.5V60.5M328.5 58.5V60.5M329.5 59.1V61.1M330.5 59.8V61.8M331.5 59.2V61.2M332.5 58.6V60.6M333.5 58.5V60.5M334.5 59.2V61.2M335.5 59.5V61.5M336.5 59.2V61.2M337.5 58.8V60.8M338.5 58.7V60.7M339.5 59.1V61.1M340.5 59.3V61.3M341.5 59.1V61.1M342.5 58.6V60.6M343.5 58.6V60.6M344.5 59.1V61.1M345.5 59.9V61.9M346.5 59.2V61.2M347.5 58.7V60.7M348.5 58.5V60.5M349.5 59.1V61.1M350.5 59.7V61.7M351.5 59.1V61.1M352.5 58.4V60.4M353.5 58.5V60.5M354.5 59.2V61.2M355.5 59.9V61.9M356.5 59.2V61.2M357.5 58.8V60.8M358.5 58.5V60.5M359.5 59.2V61.2M360.5 59.5V61.5M361.5 59.1V61.1M362.5 58.8V60.8M363.5 58.7V60.7M364.5 59.1V61.1M365.5 59.4V61.4M366.5 59.1V61.1M367.5 58.3V60.3M368.5 58.5V60.5M369.5 59.2V61.2M370.5 60.2V62.2M371.5 59.2V61.2M372.5 58.3V60.3M373.5 58.4V60.4M374.5 59.2V61.2M375.5 59.4V61.4M376.5 59.2V61.2M377.5 58.4V60.4M378.5 58.7V60.7M379.5 59.2V61.2M380.5 59.5V61.5M381.5 59.2V61.2M382.5 58.7V60.7M383.5 58.5V60.5M384.5 59.2V61.2M385.5 59.5V61.5M386.5 59.3V61.3M387.5 58.5V60.5M388.5 58.5V60.5M389.5 59.2V61.2M390.5 59.8V61.8M391.5 59.1V61.1M392.5 58.4V60.4M393.5 58.1V60.8M394.5 59.2V61.1M395.5 59.4V61.5M396.5 58.9V61.1M397.5 58.6V60.9M398.5 58.8V60.9M399.5 58.9V61.7M400.5 59.3V61.6M401.5 58.5V61.3M402.5 58.6V60.8M403.5 58.7V61.3M404.5 59.1V61.0M405.5 58.6V61.6M406.5 58.9V61.2M407.5 58.5V61.4M408.5 58.6V60.6M409.5 57.9V61.3M410.5 59.5V61.6M411.5 59.0V61.9M412.5 58.6V60.6M413.5 57.3V60.9M414.5 59.2V61.1M415.5 59.3V62.2M416.5 59.1V61.0M417.5 57.7V60.8M418.5 58.8V60.8M419.5 58.9V61.7M420.5 59.5V61.4M421.5 58.1V61.3M422.5 58.5V60.8M423.5 58.5V61.4M424.5 59.0V61.2M425.5 58.1V61.7M426.5 59.2V61.3M427.5 58.5V61.0M428.5 58.6V61.2M429.5 58.8V61.2M430.5 59.6V61.6M431.5 59.0V62.3M432.5 58.5V60.6M433.5 58.2V60.9M434.5 58.2V61.4M435.5 59.3V62.4M436.5 59.0V61.4M437.5 57.1V60.8M438.5 58.8V60.8M439.5 59.0V62.0M440.5 59.4V62.3M441.5 58.0V61.2M442.5 58.8V60.8M443.5 58.5V61.7M444.5 58.9V62.0M445.5 59.2V61.8M446.5 59.1V61.2M447.5 58.6V62.3M448.5 58.4V60.6M449.5 58.4V61.2M450.5 59.5V61.8M451.5 58.8V62.0M452.5 58.4V61.0M453.5 57.2V60.9M454.5 58.2V61.3M455.5 59.3V63.3M456.5 58.9V61.7M457.5 57.1V60.9M458.5 58.2V60.7M459.5 59.0V63.1M460.5 59.5V61.5M461.5 57.1V61.2M462.5 58.5V60.8M463.5 58.5V61.4M464.5 58.8V61.0M465.5 59.0V61.8M466.5 59.0V61.4M467.5 58.5V61.5M468.5 58.3V60.5M469.5 57.7V61.4M470.5 59.2V62.0M471.5 58.9V62.2M472.5 58.5V60.5M473.5 56.4V60.9M474.5 59.0V61.4M475.5 59.4V64.0M476.5 58.9V61.0M477.5 56.6V60.9M478.5 58.7V60.7M479.5 58.8V62.2M480.5 59.3V61.9M481.5 57.6V61.3M482.5 58.4V60.9M483.5 58.5V62.7M484.5 59.0V61.8M485.5 58.2V62.1M486.5 57.9V61.3M487.5 58.2V62.0M488.5 58.4V61.5M489.5 57.5V61.3M490.5 59.8V61.9M491.5 58.9V62.4M492.5 58.2V60.5M493.5 57.1V60.8M494.5 59.0V61.5M495.5 59.4V63.2M496.5 58.9V61.1M497.5 55.9V61.0M498.5 58.0V60.8M499.5 58.9V63.0M500.5 59.4V61.9M501.5 58.0V61.6M502.5 57.0V60.9M503.5 58.1V62.0M504.5 59.0V61.5M505.5 57.5V61.9M506.5 58.8V61.5M507.5 58.4V61.8M508.5 58.4V61.6M509.5 57.4V61.5M510.5 58.9V62.2M511.5 58.8V62.7M512.5 58.1V61.7M513.5 56.0V61.0M514.5 59.2V61.4M515.5 59.6V64.0M516.5 58.6V62.4M517.5 56.3V60.8M518.5 57.5V60.9M519.5 58.9V63.2M520.5 59.4V63.7M521.5 56.3V61.4M522.5 58.1V60.8M523.5 58.0V62.1M524.5 58.5V61.7M525.5 57.6V62.1M526.5 58.6V61.9M527.5 58.0V63.0M528.5 57.7V62.8M529.5 56.5V61.4M530.5 59.4V62.6M531.5 58.4V63.8M532.5 58.2V61.0M533.5 56.8V61.4M534.5 57.4V61.6M535.5 59.4V65.0M536.5 58.9V62.4M537.5 55.9V60.8M538.5 57.0V60.9M539.5 58.5V63.2M540.5 59.6V63.8M541.5 57.4V62.1M542.5 56.9V61.1M543.5 57.6V63.8M544.5 58.1V63.2M545.5 56.0V62.5M546.5 57.5V62.1M547.5 57.9V63.2M548.5 58.2V61.8M549.5 55.7V61.9M550.5 58.1V62.2M551.5 58.9V62.5M552.5 58.1V60.8M553.5 55.9V61.0M554.5 58.9V61.5M555.5 59.2V62.8M556.5 58.6V61.9M557.5 56.2V60.8M558.5 58.5V61.0M559.5 59.0V63.3M560.5 59.6V62.1M561.5 58.1V61.3M562.5 58.1V60.9M563.5 58.4V61.7M564.5 58.8V61.0M565.5 58.2V62.1M566.5 59.0V61.3M567.5 58.1V63.0M568.5 58.3V61.5M569.5 58.0V61.6M570.5 59.8V62.1M571.5 59.0V63.8M572.5 58.3V62.2M573.5 55.7V61.0M574.5 58.1V61.8M575.5 59.5V63.0M576.5 58.9V61.9M577.5 56.8V61.1M578.5 57.1V61.1M579.5 58.8V63.8M580.5 59.2V63.3M581.5 56.3V61.5M582.5 57.2V61.1M583.5 57.8V62.0M584.5 58.3V61.6M585.5 57.7V62.7M586.5 58.5V61.9M587.5 57.4V64.5M588.5 57.5V61.9M589.5 54.9V61.9M590.5 58.3V62.8M591.5 58.1V64.8M592.5 57.3V62.7M593.5 55.1V61.7M594.5 56.4V61.7M595.5 59.1V64.5M596.5 57.9V63.4M597.5 54.9V61.1M598.5 56.0V60.9M599.5 58.1V65.6M600.5 59.3V62.9M601.5 55.4V62.2M602.5 57.1V61.9M603.5 57.2V65.8M604.5 58.4V63.8M605.5 56.6V62.5M606.5 56.6V62.4M607.5 57.8V64.8M608.5 57.5V61.9M609.5 54.4V62.9M610.5 58.4V63.1M611.5 57.3V64.3M612.5 56.8V64.2M613.5 55.5V61.7M614.5 57.1V62.1M615.5 58.8V64.8M616.5 58.5V63.2M617.5 52.3V62.1M618.5 56.1V61.4M619.5 57.9V64.6M620.5 58.8V65.4M621.5 54.4V61.9M622.5 55.2V61.2M623.5 56.5V65.6M624.5 57.8V65.3M625.5 54.1V63.2M626.5 57.3V62.4M627.5 57.5V65.2M628.5 57.0V62.6M629.5 54.8V63.4M630.5 55.7V62.9M631.5 57.4V64.1M632.5 57.7V62.7M633.5 54.7V61.8M634.5 55.3V62.3M635.5 57.7V65.2M636.5 57.3V66.4M637.5 55.7V61.7M638.5 56.5V62.7M639.5 57.6V67.1M640.5 58.7V64.4M641.5 55.8V63.0M642.5 55.3V62.0M643.5 56.4V63.9M644.5 57.2V65.1M645.5 56.1V63.2M646.5 54.9V62.7M647.5 57.1V64.4M648.5 57.5V62.8M649.5 53.4V63.2M650.5 53.5V63.4M651.5 57.8V68.4M652.5 55.6V66.2M653.5 54.3V62.7M654.5 55.8V62.9M655.5 58.2V66.8M656.5 57.8V64.7M657.5 53.0V61.9M658.5 55.1V61.7M659.5 57.8V66.5M660.5 57.5V67.8M661.5 55.7V63.1M662.5 56.0V62.5M663.5 56.0V66.4M664.5 57.5V64.7M665.5 54.6V65.1M666.5 55.5V63.9M667.5 55.9V66.4M668.5 56.0V65.8M669.5 51.7V63.8M670.5 55.4V64.0M671.5 55.8V69.0M672.5 57.3V66.8M673.5 52.3V62.4M674.5 52.5V62.7M675.5 56.9V66.7M676.5 56.6V64.1M677.5 53.6V62.9M678.5 52.8V63.3M679.5 55.5V69.2M680.5 56.4V66.3M681.5 51.6V64.1M682.5 51.7V63.8M683.5 56.0V67.6M684.5 57.2V66.5M685.5 53.2V63.7M686.5 54.4V62.8M687.5 57.1V65.0M688.5 55.4V63.7M689.5 52.8V64.4M690.5 55.3V65.4M691.5 57.3V65.4M692.5 56.2V68.1M693.5 53.1V63.6M694.5 53.6V64.5M695.5 57.1V70.4M696.5 56.3V68.6M697.5 50.2V62.0M698.5 52.7V62.3M699.5 56.4V65.1M700.5 58.3V70.1M701.5 53.1V64.0M702.5 52.0V64.3M703.5 57.0V68.1M704.5 56.1V66.4M705.5 55.5V63.9M706.5 53.8V63.6M707.5 55.3V65.8M708.5 56.4V65.1M709.5 51.6V64.8M710.5 53.1V64.3M711.5 57.6V65.5M712.5 56.8V67.6M713.5 54.4V62.4M714.5 53.5V62.6M715.5 58.1V66.6M716.5 57.4V65.0M717.5 54.6V63.9M718.5 55.1V62.1M719.5 57.5V70.1M720.5 57.6V67.9M721.5 53.2V62.5M722.5 52.5V63.4M723.5 54.9V69.6M724.5 55.6V67.2M725.5 54.8V63.3M726.5 55.3V62.7M727.5 56.2V69.0M728.5 56.5V64.8M729.5 54.7V64.1M730.5 52.3V65.5M731.5 55.4V70.6M732.5 56.7V70.9M733.5 51.3V64.0M734.5 50.0V62.7M735.5 57.4V68.2M736.5 55.2V68.7M737.5 49.2V63.0M738.5 50.0V62.9M739.5 55.2V68.6M740.5 56.7V71.6M741.5 52.6V63.2M742.5 52.6V63.5M743.5 55.2V69.5M744.5 54.1V68.7M745.5 47.9V65.1M746.5 53.7V66.6M747.5 55.7V73.6M748.5 55.8V69.5M749.5 47.8V66.7M750.5 52.6V65.5M751.5 54.9V68.6M752.5 55.6V70.3M753.5 45.2V65.4M754.5 51.7V65.2M755.5 55.8V74.7M756.5 55.9V70.4M757.5 50.6V64.3M758.5 49.5V62.1M759.5 55.3V70.4M760.5 57.9V73.0M761.5 46.2V65.6M762.5 49.1V65.5M763.5 56.2V72.2M764.5 56.7V69.9M765.5 50.0V67.1M766.5 48.4V64.6M767.5 53.9V65.9M768.5 54.2V66.0M769.5 51.0V65.4M770.5 55.3V65.4M771.5 55.5V69.0M772.5 54.8V65.9M773.5 50.0V63.3M774.5 52.4V62.8M775.5 58.6V66.1M776.5 56.0V67.2M777.5 54.2V62.5M778.5 54.3V63.4M779.5 57.7V69.1M780.5 57.2V67.3M781.5 52.7V63.1M782.5 54.2V62.2M783.5 56.1V65.2M784.5 57.8V64.9M785.5 54.2V63.2M786.5 52.7V63.7M787.5 55.1V64.9M788.5 56.6V66.2M789.5 53.7V62.6M790.5 55.2V64.9M791.5 56.7V67.2M792.5 55.4V65.0M793.5 51.1V62.5M794.5 53.8V65.0M795.5 55.8V69.2M796.5 55.9V69.1M797.5 53.1V63.2M798.5 51.9V65.0M799.5 55.3V71.3M800.5 58.0V70.3M801.5 51.5V64.5M802.5 47.0V65.4M803.5 55.9V71.2M804.5 55.7V67.5M805.5 46.8V67.5M806.5 47.5V67.9M807.5 53.8V73.5M808.5 54.5V70.9M809.5 46.1V67.9" stroke="#3b82f6" stroke-width="1" fill="none"/></svg><div id="selend"></div><svg class="ic" style="left:0;top:0" width="8" height="8"><polygon points="0,0 8.5,0 0,8.5" fill="#3b82f6"/></svg><svg class="ic" style="left:338px;top:0" width="9" height="9"><polygon points="0,0 9,0 9,9" fill="#3b82f6"/></svg><svg class="ic" style="left:-1px;top:0" width="4" height="120"><rect x="0.8" y="0" width="1.3" height="120" fill="#ef4444"/></svg></div>
<div class="t" style="left:187.5px;top:385.80px;font:12px/12px 'Liberation Mono',monospace;color:#3b82f6;">00:00.000</div>
<div class="t" style="left:259.5px;top:385.80px;font:12px/12px 'Liberation Mono',monospace;color:#525252;">-</div>
<div class="t" style="left:273.9px;top:385.80px;font:12px/12px 'Liberation Mono',monospace;color:#3b82f6;">00:02.138</div>
<div class="t" style="left:345.9px;top:385.80px;font:12px/12px 'Liberation Mono',monospace;color:#c8c8c8;">(2.139s selected)</div>
<div class="t" style="left:391.5px;width:600px;text-align:right;top:385.80px;font:12px/12px 'Liberation Mono',monospace;color:#737373;">Total: 00:05.000</div>
<svg class="ic" style="left:527px;top:436px" width="16" height="16" viewBox="0 0 24 24" fill="none" stroke="#707070" stroke-width="2" stroke-linecap="round" stroke-linejoin="round"><path d="M3 12a9 9 0 1 0 9-9 9.750 9.750 0 0 0-6.740 2.740L3 8"/><path d="M3 3v5h5"/></svg>
<div id="playbtn"></div>
<svg class="ic" style="left:578px;top:432px" width="24" height="24" viewBox="0 0 24 24" fill="none" stroke="#ffffff" stroke-width="2" stroke-linecap="round" stroke-linejoin="round"><polygon points="6 3 20 12 6 21 6 3"/></svg>
<svg class="ic" style="left:637px;top:436px" width="16" height="16" viewBox="0 0 24 24" fill="none" stroke="#707070" stroke-width="2" stroke-linecap="round" stroke-linejoin="round"><path d="m17 2 4 4-4 4"/><path d="M3 11v-1a4 4 0 0 1 4-4h14"/><path d="m7 22-4-4 4-4"/><path d="M21 13v1a4 4 0 0 1-4 4H3"/></svg>
<div id="info"></div>
<div class="t" style="left:183px;top:498.90px;font:14.3px/14.3px 'Liberation Sans',sans-serif;letter-spacing:0.15px;color:#696969;">Format:</div>
<div class="t" style="left:241.3px;top:498.90px;font:14.3px/14.3px 'Liberation Sans',sans-serif;letter-spacing:0.2px;color:#e5e5e5;">WAV</div>
<div class="t" style="left:459.3px;top:498.90px;font:14.3px/14.3px 'Liberation Sans',sans-serif;letter-spacing:0.2px;color:#696969;">Duration:</div>
<div class="t" style="left:527px;top:500.27px;font:14px/14px 'Liberation Mono',monospace;color:#e5e5e5;">0:05</div>
<div class="t" style="left:736px;top:498.90px;font:14.3px/14.3px 'Liberation Sans',sans-serif;color:#696969;">Sample Rate:</div>
<div class="t" style="left:831px;top:500.27px;font:14px/14px 'Liberation Mono',monospace;color:#e5e5e5;">48000 Hz</div>
<div class="t" style="left:167px;top:575.90px;font:14.3px/14.3px 'Liberation Sans',sans-serif;letter-spacing:0.3px;color:#737373;">No changes</div>
<div class="t" style="left:550px;top:575.90px;font:14.3px/14.3px 'Liberation Sans',sans-serif;letter-spacing:0.2px;color:#7a7a7a;-webkit-text-stroke:0.12px currentColor">Close</div>
<div class="btn" style="left:613px;width:119px;background:#1f1f1f"></div>
<svg class="ic" style="left:629px;top:576px" width="14" height="14" viewBox="0 0 24 24" fill="none" stroke="#f0f0f0" stroke-width="2" stroke-linecap="round" stroke-linejoin="round"><path d="m22 2-7 20-4-9-9-4Z"/><path d="M22 2 11 13"/></svg>
<div class="t" style="left:649px;top:575.90px;font:14.3px/14.3px 'Liberation Sans',sans-serif;letter-spacing:0.35px;color:#f5f5f5;-webkit-text-stroke:0.12px currentColor">To Project</div>
<div class="btn" style="left:740px;width:147px;background:#191919"></div>
<svg class="ic" style="left:756px;top:576px" width="14" height="14" viewBox="0 0 24 24" fill="none" stroke="#808080" stroke-width="2" stroke-linecap="round" stroke-linejoin="round"><path d="m21.640 3.640-1.280-1.280a1.210 1.210 0 0 0-1.720 0L2.360 18.640a1.210 1.210 0 0 0 0 1.720l1.280 1.280a1.200 1.200 0 0 0 1.720 0L21.640 5.360a1.200 1.200 0 0 0 0-1.720"/><path d="m14 7 3 3"/><path d="M5 6v4"/><path d="M19 14v4"/><path d="M10 2v2"/><path d="M7 8H3"/><path d="M21 16h-4"/><path d="M11 3H9"/></svg>
<div class="t" style="left:776px;top:575.90px;font:14.3px/14.3px 'Liberation Sans',sans-serif;letter-spacing:0.4px;color:#808080;-webkit-text-stroke:0.12px currentColor">Add to Library</div>
<div class="btn" style="left:895px;width:118px;background:#264a84"></div>
<svg class="ic" style="left:911px;top:576px" width="14" height="14" viewBox="0 0 24 24" fill="none" stroke="#8f8f8f" stroke-width="2" stroke-linecap="round" stroke-linejoin="round"><path d="M19 21H5a2 2 0 0 1-2-2V5a2 2 0 0 1 2-2h11l5 5v11a2 2 0 0 1-2 2z"/><polyline points="17 21 17 13 7 13 7 21"/><polyline points="7 3 7 8 15 8"/></svg>
<div class="t" style="left:931px;top:575.90px;font:14.3px/14.3px 'Liberation Sans',sans-serif;letter-spacing:0.5px;color:#929292;-webkit-text-stroke:0.12px currentColor">Overwrite</div>
</div></body></html>
